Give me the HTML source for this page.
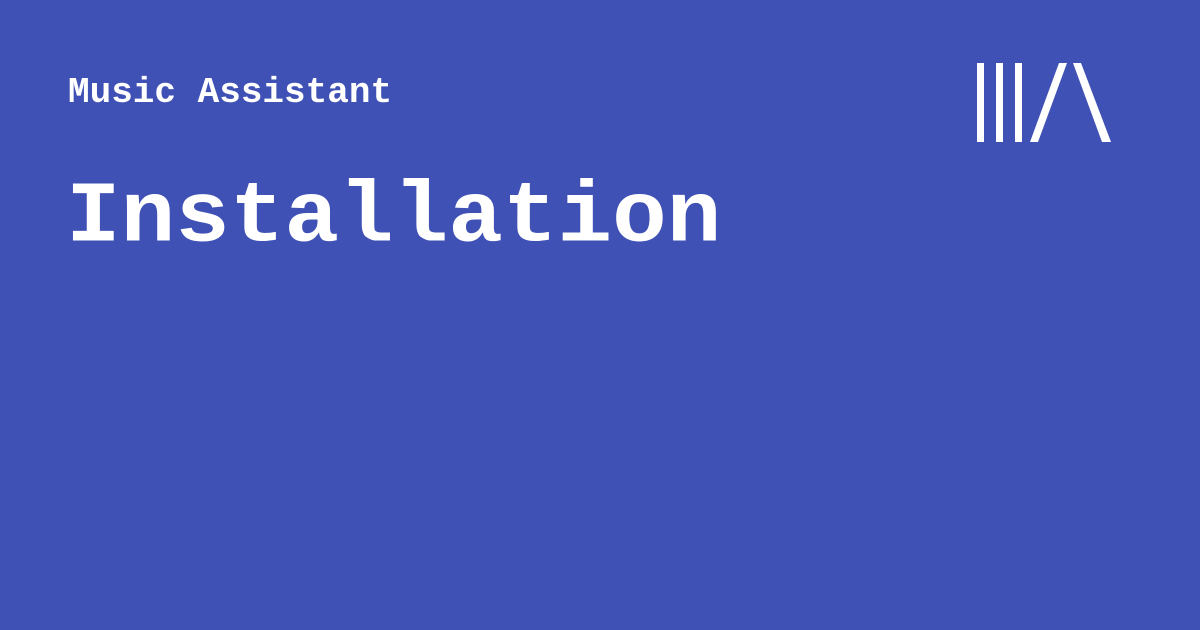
<!DOCTYPE html>
<html><head><style>
html,body{margin:0;padding:0}
body{width:1200px;height:630px;background:#3f51b5;position:relative;overflow:hidden;font-family:"Liberation Mono",monospace;color:#fff}
.a{position:absolute;left:68px;top:69px;font-size:36px;line-height:48px;font-weight:bold;white-space:nowrap}
.b{position:absolute;left:66px;top:171px;font-size:91px;line-height:100px;font-weight:bold;transform:scaleY(0.95);transform-origin:left top;white-space:nowrap}
</style></head><body>
<div class="a">Music Assistant</div>
<div class="b">Installation</div>
<svg style="position:absolute;left:0;top:0" width="1200" height="630">
<g fill="#fff">
<rect x="977" y="63" width="7" height="79"/>
<rect x="996" y="63" width="7" height="79"/>
<rect x="1015" y="63" width="7" height="79"/>
<polygon points="1059,63 1067,63 1038,142 1030,142"/>
<polygon points="1073,63 1081,63 1111,142 1102,142"/>
</g></svg>
</body></html>
